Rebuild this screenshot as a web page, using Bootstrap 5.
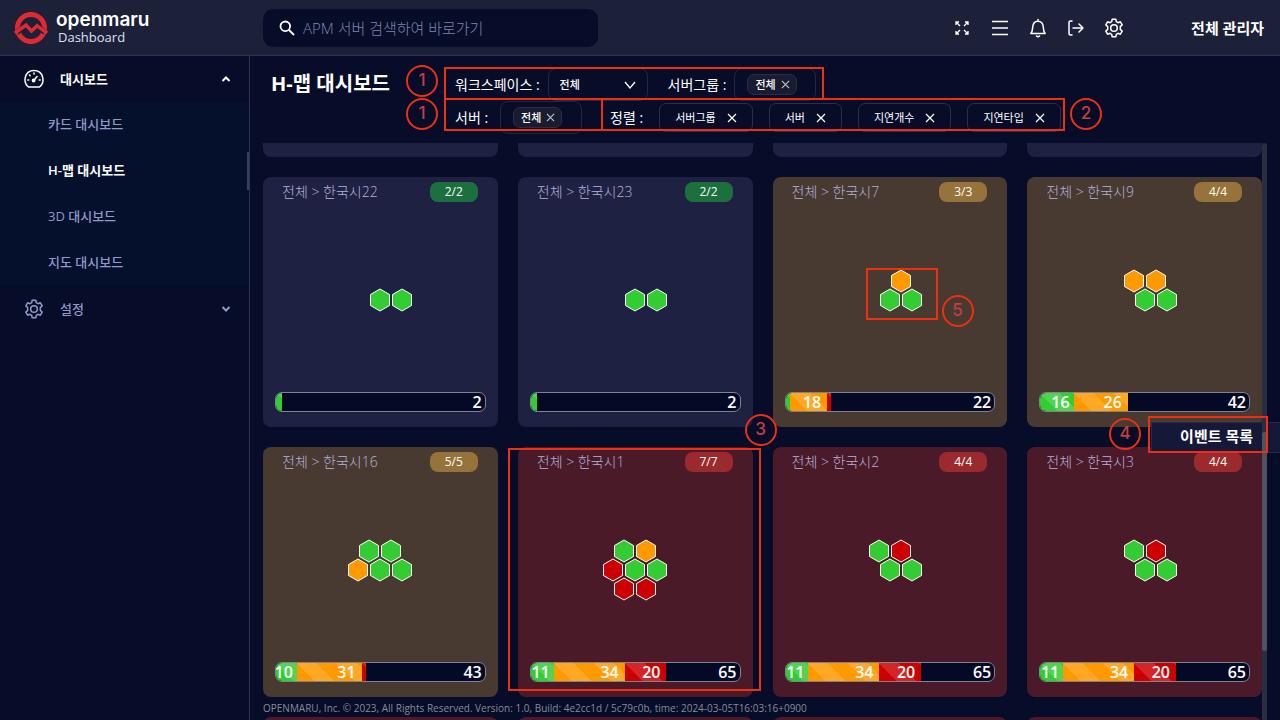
<!DOCTYPE html>
<html lang="ko">
<head>
<meta charset="utf-8">
<meta name="viewport" content="width=device-width, initial-scale=1">
<title>H-맵 대시보드</title>
<link href="https://cdn.jsdelivr.net/npm/bootstrap@5.3.0/dist/css/bootstrap.min.css" rel="stylesheet">
<style>
  :root { --ink: #070c28; --bar: #1d2039; --line: #30344f; --muted: #9298c8; --note: #ee2f12; }
  body { background: var(--ink); color: #fff; font: 400 14px/20px "Open Sans", "Noto Sans CJK KR", sans-serif; }
  a { color: inherit; text-decoration: none; }
  svg { display: block; flex: none; }
  .line-icon { fill: none; stroke: currentColor; stroke-width: 1.5; stroke-linecap: round; stroke-linejoin: round; }

  .topbar { height: 56px; background: var(--bar); border-bottom: 1px solid var(--line); }
  .brand-area { width: 263px; padding-left: 14px; }
  .brand-name { font: 600 19px/18px "Inter", sans-serif; }
  .brand-sub { font-size: 13px; line-height: 14px; color: #dfe1f0; padding-left: 2px; }
  .brand-text { gap: 1px; }
  .search-box { width: 335px; height: 38px; border-radius: 10px; background: var(--ink); padding: 0 16px; }
  .search-box input { font-size: 15px; font-weight: 300; color: #fff; background: none; border: 0; outline: 0; }
  .search-box input::placeholder { color: #7f85b2; opacity: 1; }
  .tool-icons { gap: 18px; }
  .tool-icons .btn { width: 20px; height: 20px; color: #fff; }
  .user-name { font-size: 15px; font-weight: 600; margin-left: 67px; }

  .side { width: 250px; border-right: 1px solid var(--line); font-size: 13px; font-weight: 500; }
  .side a { height: 46px; }
  .side-top { padding: 0 16px 0 24px; gap: 16px; }
  .side-muted, .side-sub a { color: var(--muted); }
  .side-sub { background: #05102d; }
  .side-sub a { padding: 0 0 2px 48px; }
  .side-sub a.active { color: #fff; font-weight: 600; position: relative; }
  .side-sub a.active::after { content: ""; position: absolute; right: 0; top: 4px; bottom: 4px; width: 2px; background: #3b3f5e; }

  .content-area { padding: 12px 13px 0; }
  .page-title { width: 182px; padding: 4px 0 0 8px; font-size: 20px; line-height: 24px; font-weight: 700; }
  .filters { padding: 0 10px 9px; position: relative; }
  .filter-row { height: 33px; }
  .field { border: 1px solid #23273f; border-radius: 8px; height: 33px; }
  select.field { width: 100px; background: url("data:image/svg+xml,%3Csvg xmlns='http://www.w3.org/2000/svg' width='12' height='8'%3E%3Cpath d='M1 1l5 6 5-6' fill='none' stroke='white' stroke-width='1.3'/%3E%3C/svg%3E") no-repeat right 11px center; color: #fff; appearance: none; font-size: 11px; font-weight: 500; padding: 0 11px; }
  .tag-field { width: 82px; padding-left: 12px; }
  .tag { height: 21px; padding: 0 6px 0 7px; gap: 5px; font-size: 11px; font-weight: 500; background: #191c31; border: 1px solid #2b2e45; border-radius: 7px; }
  .sort-chip { height: 29px; padding: 0 15px; gap: 11px; font-size: 11px; border: 1px solid #2b2f49; border-radius: 7px; }
  .tag button, .sort-chip button { padding: 0; border: 0; background: none; color: inherit; }
  .tag button { opacity: .75; }

  .map-area { position: relative; overflow: hidden; min-height: 0; }
  .map-grid { --bs-gutter-x: 20px; --bs-gutter-y: 20px; margin-top: 0; }
  .map-grid > .col { margin-top: 0; margin-bottom: 20px; }
  .tail { height: 14px; border-radius: 0 0 8px 8px; background: #1f2142; }
  .next-card { height: 20px; border-radius: 8px 8px 0 0; background: #4a1a28; }
  .hcard { position: relative; height: 250px; border-radius: 8px; background: #1f2142; padding: 5px 12px 15px; }
  .hcard.warn { background: #483a30; }
  .hcard.crit { background: #4a1a28; }
  .hcard h2 { font-size: 14px; line-height: 20px; font-weight: 300; color: #b3b1dc; margin: 0; }
  .hcard-head { padding: 0 8px 0 7px; }
  .count { width: 48px; height: 20px; border-radius: 8px; background: #1c703d; font-size: 12px; text-align: center; }
  .warn .count { background: #96733a; }
  .crit .count { background: #9a2a2e; }
  .hexes { margin: auto; stroke: #fff; stroke-width: 1; }
  .g { fill: #3c3; } .o { fill: #f90; } .r { fill: #c00; }
  .load { --bs-progress-height: 20px; --bs-progress-bg: #040a26; border: 1px solid #7f8390; border-radius: 7px; font: 600 16px/18px "Open Sans", sans-serif; }
  .load .progress-bar { flex: none; flex-direction: row; justify-content: flex-end; align-items: center; overflow: visible; padding-right: 6px; background-size: 40px 40px; }
  .load .bar-g { padding-right: 4px; }
  .load .thin { padding: 0; }
  .bar-g { background-color: #3c3; } .bar-o { background-color: #f90; } .bar-r { background-color: #c00; }
  .load .rest { flex: 1; padding-right: 3px; text-align: right; }
  .scroll-track { position: absolute; z-index: 2; right: 0; top: 0; bottom: 0; width: 5px; background: #2b2d40; border-radius: 3px 3px 0 0; }
  .scroll-thumb { position: absolute; top: 50%; height: 38%; width: 5px; background: #50525f; border-radius: 3px; }
  .scroll-space { padding-right: 5px; }
  .event-btn { position: absolute; z-index: 1; right: 0; top: 366px; width: 129px; height: 31px; padding: 0 27px 4px 0; text-align: right; font-size: 15px; font-weight: 700; color: #fff; background: #151836; border: 1px solid #262a49; border-right: 0; }
  .page-foot { position: absolute; z-index: 1; left: 13px; bottom: 5px; font-size: 10px; line-height: 14px; color: #888b99; }

  /* numbered guide marks laid over the screen */
  .mark-box { position: absolute; z-index: 3; border: 2px solid var(--note); pointer-events: none; }
  .mark-no { position: absolute; z-index: 3; width: 32px; height: 32px; border: 2px solid var(--note); border-radius: 50%; color: #c93c3e; font: 500 17px/27px "Inter", sans-serif; text-align: center; pointer-events: none; }
  .box-a { left: -1px; top: -1px; width: 380px; height: 33px; }
  .box-b { left: -1px; top: 30px; width: 159px; height: 33px; }
  .box-c { left: 156px; top: 30px; width: 464px; height: 33px; }
  .no-a { left: -39px; top: -3px; }
  .no-b { left: -39px; top: 30px; }
  .no-c { left: 625px; top: 30px; }
  .box-d { left: -10px; top: 1px; right: -8px; bottom: 6px; }
  .no-d { right: -24px; top: -33px; }
  .box-e { right: 12px; top: 360px; width: 120px; height: 37px; }
  .no-e { right: 139px; top: 362px; }
  .box-f { left: 93px; top: 91px; width: 72px; height: 52px; }
  .no-f { left: 169px; top: 118px; }
</style>
</head>
<body class="vh-100 d-flex flex-column overflow-hidden">
<svg width="0" height="0" class="position-absolute" aria-hidden="true">
  <symbol id="x" viewBox="0 0 10 10"><path d="M1 1l8 8M9 1L1 9" fill="none" stroke="currentColor" stroke-width="1.2"/></symbol>
  <symbol id="gear" viewBox="0 0 20 20"><path class="line-icon" d="M8.2 1.2h3.6l.5 2.5 1.7 1 2.4-.9 1.8 3.1-1.9 1.7v2.8l1.9 1.7-1.8 3.1-2.4-.9-1.7 1-.5 2.5H8.2l-.5-2.5-1.7-1-2.4.9-1.8-3.1 1.9-1.7V8.600L1.800 6.900l1.800-3.100 2.400.900 1.700-1z"/><circle class="line-icon" cx="10" cy="10" r="3.300"/></symbol>
  <path id="hex" d="M0-11L9.500-5.500V5.500L0 11L-9.500 5.500V-5.500z"/>
</svg>

<header class="topbar d-flex align-items-center flex-shrink-0 pe-3">
  <a href="#" class="brand-area d-flex align-items-center gap-2">
    <svg width="34" height="34" viewBox="0 0 34 34"><circle cx="17" cy="17" r="13.500" fill="none" stroke="#de2a30" stroke-width="5"/><path d="M3 21.500L12 14l5.500 5.500 5.500-5L31 21.500" fill="none" stroke="#1d2039" stroke-width="5"/><path d="M1 22L12 14l5.500 6 5.500-5.300L33 22" fill="none" stroke="#de2a30" stroke-width="3.500"/></svg>
    <span class="brand-text d-flex flex-column"><span class="brand-name">openmaru</span><span class="brand-sub">Dashboard</span></span>
  </a>
  <label class="search-box d-flex align-items-center gap-2">
    <svg width="16" height="16" viewBox="0 0 16 16" fill="none" stroke="#fff" stroke-width="1.800"><circle cx="6.300" cy="6.300" r="4.800"/><path d="M10 10l5 5"/></svg>
    <input type="search" class="flex-fill p-0" placeholder="APM 서버 검색하여 바로가기" aria-label="검색">
  </label>
  <div class="tool-icons d-flex ms-auto">
    <button class="btn p-0 border-0" aria-label="전체 화면"><svg width="20" height="20" viewBox="0 0 20 20" fill="none" stroke="currentColor" stroke-width="1.300"><path d="M4 7V4H7M4 4L8 8M13 4h3V7M16 4L12 8M4 13v3H7M4 16L8 12M13 16h3V13M16 16L12 12"/></svg></button>
    <button class="btn p-0 border-0" aria-label="메뉴"><svg width="20" height="20" viewBox="0 0 20 20" stroke="currentColor" stroke-width="1.500"><path d="M2 3.500h16M2 10h16M2 16.500h16"/></svg></button>
    <button class="btn p-0 border-0" aria-label="알림"><svg class="line-icon" width="20" height="20" viewBox="0 0 20 20"><path d="M2.800 15.500h14.400c-1.700-1.700-1.700-3.500-1.900-6.500C15 5.500 13 3.200 10 3.200S5 5.500 4.700 9c-.2 3-.2 4.800-1.900 6.500zM10 1.500v1.500M8.500 18c.8.700 2.200.7 3 0"/></svg></button>
    <button class="btn p-0 border-0" aria-label="로그아웃"><svg class="line-icon" width="20" height="20" viewBox="0 0 20 20"><path d="M6 3H4.500Q3 3 3 4.500v11Q3 17 4.500 17H6M7 10h10M13 6l4 4-4 4"/></svg></button>
    <button class="btn p-0 border-0" aria-label="설정"><svg width="20" height="20"><use href="#gear"/></svg></button>
  </div>
  <a href="#" class="user-name">전체 관리자</a>
</header>

<div class="d-flex flex-fill overflow-hidden position-relative">
  <nav class="side flex-shrink-0">
    <a href="#" class="side-top d-flex align-items-center fw-semibold">
      <svg class="line-icon" width="20" height="20" viewBox="0 0 20 20"><path d="M4.500 18C-1.500 13 .5 1.500 10 1.500S21.500 13 15.500 18zM9.800 11.500L13 7.500M10 4v1M5.500 6l.6.6M3.800 11h1M15.200 11h1"/><circle cx="9.600" cy="11.500" r="1.200"/></svg>
      <span>대시보드</span>
      <svg class="ms-auto" width="14" height="14" viewBox="0 0 14 14" fill="none" stroke="#fff" stroke-width="2"><path d="M3.500 9L7 5.500 10.500 9"/></svg>
    </a>
    <div class="side-sub">
      <a href="#" class="d-flex align-items-center">카드 대시보드</a>
      <a href="#" class="d-flex align-items-center active">H-맵 대시보드</a>
      <a href="#" class="d-flex align-items-center">3D 대시보드</a>
      <a href="#" class="d-flex align-items-center">지도 대시보드</a>
    </div>
    <a href="#" class="side-top side-muted d-flex align-items-center">
      <svg width="20" height="20"><use href="#gear"/></svg>
      <span>설정</span>
      <svg class="ms-auto" width="14" height="14" viewBox="0 0 14 14" fill="none" stroke="currentColor" stroke-width="2"><path d="M3.500 5L7 8.500 10.500 5"/></svg>
    </a>
  </nav>

  <main class="content-area flex-fill d-flex flex-column position-relative overflow-hidden">
    <div class="d-flex flex-shrink-0">
      <h1 class="page-title flex-shrink-0 mb-0">H-맵 대시보드</h1>
      <div class="filters flex-fill">
        <div class="filter-row d-flex align-items-center">
          <label for="ws" class="me-2">워크스페이스 :</label>
          <select id="ws" class="field"><option>전체</option></select>
          <span class="ms-3 ps-1 me-2">서버그룹 :</span>
          <div class="field tag-field d-flex align-items-center"><span class="tag d-flex align-items-center">전체<button aria-label="삭제"><svg width="9" height="9"><use href="#x"/></svg></button></span></div>
        </div>
        <div class="filter-row d-flex align-items-center">
          <span class="me-2 pe-1">서버 :</span>
          <div class="field tag-field d-flex align-items-center"><span class="tag d-flex align-items-center">전체<button aria-label="삭제"><svg width="9" height="9"><use href="#x"/></svg></button></span></div>
          <span class="ms-4 ps-1 me-3">정렬 :</span>
          <div class="d-flex gap-3">
            <span class="sort-chip d-flex align-items-center">서버그룹<button aria-label="삭제"><svg width="10" height="10"><use href="#x"/></svg></button></span>
            <span class="sort-chip d-flex align-items-center">서버<button aria-label="삭제"><svg width="10" height="10"><use href="#x"/></svg></button></span>
            <span class="sort-chip d-flex align-items-center">지연개수<button aria-label="삭제"><svg width="10" height="10"><use href="#x"/></svg></button></span>
            <span class="sort-chip d-flex align-items-center">지연타입<button aria-label="삭제"><svg width="10" height="10"><use href="#x"/></svg></button></span>
          </div>
        </div>
        <div class="mark-box box-a"></div><div class="mark-box box-b"></div><div class="mark-box box-c"></div>
        <span class="mark-no no-a">1</span><span class="mark-no no-b">1</span><span class="mark-no no-c">2</span>
      </div>
    </div>

    <div class="map-area flex-fill scroll-space">
      <div class="row row-cols-4 map-grid">
        <div class="col"><div class="tail"></div></div>
        <div class="col"><div class="tail"></div></div>
        <div class="col"><div class="tail"></div></div>
        <div class="col"><div class="tail"></div></div>

        <div class="col"><section class="hcard d-flex flex-column">
          <div class="hcard-head d-flex justify-content-between"><h2>전체 &gt; 한국시22</h2><span class="count">2/2</span></div>
          <svg class="hexes" width="120" height="90" viewBox="-60 -48 120 90"><use href="#hex" class="g"/><use href="#hex" x="22" class="g"/></svg>
          <div class="progress load"><div class="progress-bar progress-bar-striped bar-g thin" style="width:3%"></div><span class="rest">2</span></div>
        </section></div>
        <div class="col"><section class="hcard d-flex flex-column">
          <div class="hcard-head d-flex justify-content-between"><h2>전체 &gt; 한국시23</h2><span class="count">2/2</span></div>
          <svg class="hexes" width="120" height="90" viewBox="-60 -48 120 90"><use href="#hex" class="g"/><use href="#hex" x="22" class="g"/></svg>
          <div class="progress load"><div class="progress-bar progress-bar-striped bar-g thin" style="width:3%"></div><span class="rest">2</span></div>
        </section></div>
        <div class="col"><section class="hcard warn d-flex flex-column">
          <div class="hcard-head d-flex justify-content-between"><h2>전체 &gt; 한국시7</h2><span class="count">3/3</span></div>
          <svg class="hexes" width="120" height="90" viewBox="-60 -48 120 90"><use href="#hex" x="11" y="-19" class="o"/><use href="#hex" class="g"/><use href="#hex" x="22" class="g"/></svg>
          <div class="progress load"><div class="progress-bar progress-bar-striped bar-g thin" style="width:2%"></div><div class="progress-bar progress-bar-striped bar-o" style="width:18%">18</div><div class="progress-bar progress-bar-striped bar-r thin" style="width:2%"></div><span class="rest">22</span></div>
          <div class="mark-box box-f"></div><span class="mark-no no-f">5</span>
        </section></div>
        <div class="col"><section class="hcard warn d-flex flex-column">
          <div class="hcard-head d-flex justify-content-between"><h2>전체 &gt; 한국시9</h2><span class="count">4/4</span></div>
          <svg class="hexes" width="120" height="90" viewBox="-60 -48 120 90"><use href="#hex" x="-11" y="-19" class="o"/><use href="#hex" x="11" y="-19" class="o"/><use href="#hex" class="g"/><use href="#hex" x="22" class="g"/></svg>
          <div class="progress load"><div class="progress-bar progress-bar-striped bar-g" style="width:16%">16</div><div class="progress-bar progress-bar-striped bar-o" style="width:26%">26</div><span class="rest">42</span></div>
        </section></div>

        <div class="col"><section class="hcard warn d-flex flex-column">
          <div class="hcard-head d-flex justify-content-between"><h2>전체 &gt; 한국시16</h2><span class="count">5/5</span></div>
          <svg class="hexes" width="120" height="90" viewBox="-60 -48 120 90"><use href="#hex" x="-11" y="-19" class="g"/><use href="#hex" x="11" y="-19" class="g"/><use href="#hex" x="-22" class="o"/><use href="#hex" class="g"/><use href="#hex" x="22" class="g"/></svg>
          <div class="progress load"><div class="progress-bar progress-bar-striped bar-g" style="width:10%">10</div><div class="progress-bar progress-bar-striped bar-o" style="width:31%">31</div><div class="progress-bar progress-bar-striped bar-r thin" style="width:2%"></div><span class="rest">43</span></div>
        </section></div>
        <div class="col"><section class="hcard crit d-flex flex-column">
          <div class="hcard-head d-flex justify-content-between"><h2>전체 &gt; 한국시1</h2><span class="count">7/7</span></div>
          <svg class="hexes" width="120" height="90" viewBox="-60 -48 120 90"><use href="#hex" x="-11" y="-19" class="g"/><use href="#hex" x="11" y="-19" class="o"/><use href="#hex" x="-22" class="r"/><use href="#hex" class="g"/><use href="#hex" x="22" class="g"/><use href="#hex" x="-11" y="19" class="r"/><use href="#hex" x="11" y="19" class="r"/></svg>
          <div class="progress load"><div class="progress-bar progress-bar-striped bar-g" style="width:11%">11</div><div class="progress-bar progress-bar-striped bar-o" style="width:34%">34</div><div class="progress-bar progress-bar-striped bar-r" style="width:20%">20</div><span class="rest">65</span></div>
          <div class="mark-box box-d"></div><span class="mark-no no-d">3</span>
        </section></div>
        <div class="col"><section class="hcard crit d-flex flex-column">
          <div class="hcard-head d-flex justify-content-between"><h2>전체 &gt; 한국시2</h2><span class="count">4/4</span></div>
          <svg class="hexes" width="120" height="90" viewBox="-60 -48 120 90"><use href="#hex" x="-11" y="-19" class="g"/><use href="#hex" x="11" y="-19" class="r"/><use href="#hex" class="g"/><use href="#hex" x="22" class="g"/></svg>
          <div class="progress load"><div class="progress-bar progress-bar-striped bar-g" style="width:11%">11</div><div class="progress-bar progress-bar-striped bar-o" style="width:34%">34</div><div class="progress-bar progress-bar-striped bar-r" style="width:20%">20</div><span class="rest">65</span></div>
        </section></div>
        <div class="col"><section class="hcard crit d-flex flex-column">
          <div class="hcard-head d-flex justify-content-between"><h2>전체 &gt; 한국시3</h2><span class="count">4/4</span></div>
          <svg class="hexes" width="120" height="90" viewBox="-60 -48 120 90"><use href="#hex" x="-11" y="-19" class="g"/><use href="#hex" x="11" y="-19" class="r"/><use href="#hex" class="g"/><use href="#hex" x="22" class="g"/></svg>
          <div class="progress load"><div class="progress-bar progress-bar-striped bar-g" style="width:11%">11</div><div class="progress-bar progress-bar-striped bar-o" style="width:34%">34</div><div class="progress-bar progress-bar-striped bar-r" style="width:20%">20</div><span class="rest">65</span></div>
        </section></div>

        <div class="col"><div class="next-card"></div></div>
        <div class="col"><div class="next-card"></div></div>
        <div class="col"><div class="next-card"></div></div>
        <div class="col"><div class="next-card"></div></div>
      </div>
      <div class="scroll-track"><div class="scroll-thumb"></div></div>
    </div>
    <button class="event-btn">이벤트 목록</button>
    <div class="mark-box box-e"></div><span class="mark-no no-e">4</span>
    <footer class="page-foot">OPENMARU, Inc. © 2023, All Rights Reserved. Version: 1.0, Build: 4e2cc1d / 5c79c0b, time: 2024-03-05T16:03:16+0900</footer>
  </main>
</div>
<script src="https://cdn.jsdelivr.net/npm/bootstrap@5.3.0/dist/js/bootstrap.bundle.min.js"></script>
</body>
</html>
